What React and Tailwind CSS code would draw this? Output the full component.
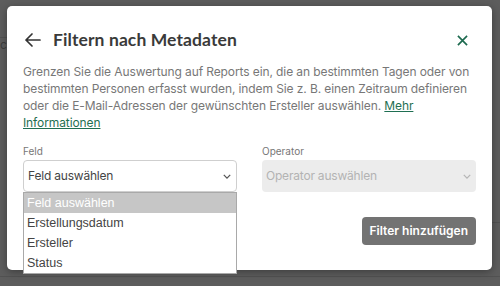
import React from 'react'

const Chevron = ({ className }) => (
  <svg viewBox="0 0 10 6" className={className} fill="none" stroke="currentColor" strokeWidth="1.6">
    <path d="M1 1l4 4 4-4" />
  </svg>
)

const options = ['Feld auswählen', 'Erstellungsdatum', 'Ersteller', 'Status']

export default function App() {
  return (
    <div className="relative w-[500px] h-[286px] overflow-hidden bg-[#5d5d5d]" style={{ fontFamily: 'Inter, "Noto Sans", sans-serif' }}>
      {/* faint page behind the overlay */}
      <div className="absolute left-0 top-[37px] w-[7px] h-px bg-[#525252]" />
      <div className="absolute left-0 top-[36px] text-[12px] text-[#3e3e3e]">c</div>
      <div className="absolute left-0 right-0 top-[276px] h-px bg-[#525252]" />
      <div className="absolute right-0 top-[222px] w-[8px] h-px bg-[#525252]" />

      <div className="absolute left-[7px] top-[6px] w-[485px] h-[264px] rounded-[5px] bg-white shadow-[0_2px_8px_rgba(0,0,0,0.35)] px-4 pt-[21px]">
        <div className="flex items-center justify-between">
          <div className="flex items-center gap-[10px]">
            <svg viewBox="0 0 20 20" className="w-[20px] h-[20px] text-[#333]" fill="none" stroke="currentColor" strokeWidth="1.7" strokeLinecap="round" strokeLinejoin="round">
              <path d="M17 10H3M9 4l-6 6 6 6" />
            </svg>
            <h1 className="text-[17.5px] font-bold text-[#3a3a3a] tracking-[0.1px]" style={{ fontFamily: 'Lato, Inter, sans-serif' }}>Filtern nach Metadaten</h1>
          </div>
          <svg viewBox="0 0 12 12" className="w-[11px] h-[11px] mr-[8px] text-[#1d6a4f]" fill="none" stroke="currentColor" strokeWidth="1.8">
            <path d="M1 1l10 10M11 1L1 11" />
          </svg>
        </div>

        <p className="mt-[10px] text-[12px] leading-[17px] tracking-[-0.1px] text-[#777]">
          Grenzen Sie die Auswertung auf Reports ein, die an bestimmten Tagen oder von bestimmten Personen erfasst wurden, indem Sie z. B. einen Zeitraum definieren oder die E-Mail-Adressen der gewünschten Ersteller auswählen.{' '}
          <span className="text-[#1f6f52] underline underline-offset-1">Mehr Informationen</span>
        </p>

        <div className="mt-[14px] grid grid-cols-2 gap-[25px]">
          <div className="relative">
            <div className="text-[10px] text-[#777] leading-[13px]">Feld</div>
            <div className="mt-[2px] h-[32px] rounded-[4px] border border-[#cfcfcf] flex items-center justify-between px-[4px]">
              <span className="text-[12px] tracking-[-0.2px] text-[#444]">Feld auswählen</span>
              <Chevron className="w-[8px] h-[5px] text-[#555] mr-[1px]" />
            </div>
            <div className="absolute left-0 right-0 top-[47px] bg-white border border-[#a9a9a9] z-10" style={{ fontFamily: '"Liberation Sans", Arial, sans-serif' }}>
              {options.map((o, i) => (
                <div key={o} className={`h-[20px] px-[3px] flex items-center text-[12.5px] ${i === 0 ? 'bg-[#c6c6c6] text-white' : 'text-[#444]'}`}>{o}</div>
              ))}
            </div>
          </div>
          <div>
            <div className="text-[10px] text-[#777] leading-[13px]">Operator</div>
            <div className="mt-[2px] h-[32px] rounded-[4px] bg-[#ececec] flex items-center justify-between px-[4px]">
              <span className="text-[12px] tracking-[-0.2px] text-[#b3b3b3]">Operator auswählen</span>
              <Chevron className="w-[8px] h-[5px] text-[#b5b5b5] mr-[1px]" />
            </div>
          </div>
        </div>

        <div className="mt-[25px] flex justify-end">
          <button className="h-[28px] px-[8px] rounded-[4px] bg-[#737373] text-white text-[12px] font-semibold">Filter hinzufügen</button>
        </div>
      </div>
    </div>
  )
}
